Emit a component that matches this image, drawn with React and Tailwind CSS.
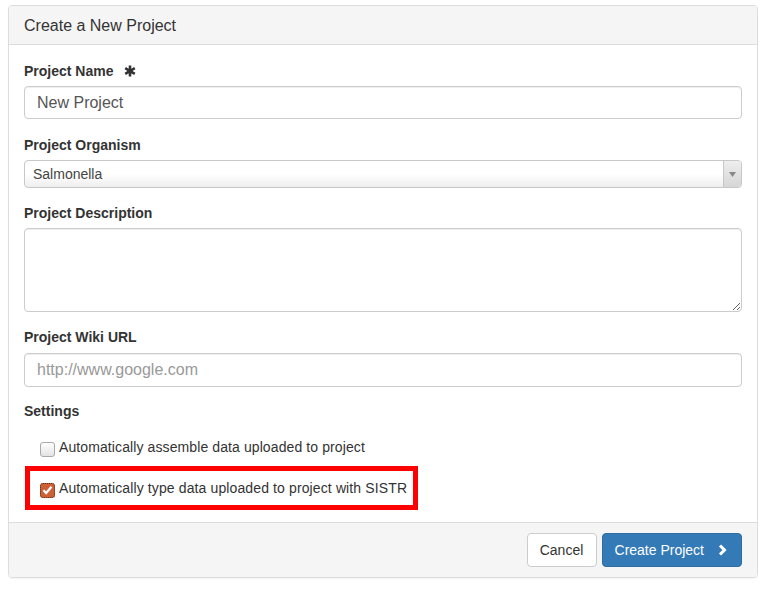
import React from 'react'

const FONT = { fontFamily: '"Liberation Sans", Arial, Helvetica, sans-serif' }

function Label({ children, mb = 'mb-[5px]' }) {
  return <div className={`h-[20px] leading-[20px] text-[14px] font-bold text-[#333] flex items-center ${mb}`}>{children}</div>
}

function Asterisk() {
  return (
    <svg width="12" height="12" viewBox="0 0 12 12" className="ml-[11px]">
      <g stroke="#333" strokeWidth="2.6" strokeLinecap="butt">
        <line x1="6" y1="0.5" x2="6" y2="11.5" />
        <line x1="1.2" y1="3.2" x2="10.8" y2="8.8" />
        <line x1="1.2" y1="8.8" x2="10.8" y2="3.2" />
      </g>
      <circle cx="6" cy="6" r="2.6" fill="#333" />
    </svg>
  )
}

function Checkbox({ checked }) {
  if (checked) {
    return (
      <span className="w-[15px] h-[15px] rounded-[3px] bg-[#cd6136] border border-dotted border-[#5a2a18] flex items-center justify-center shrink-0">
        <svg width="11" height="10" viewBox="0 0 11 10">
          <polyline points="1.5,5.2 4.2,8 9.5,1.8" fill="none" stroke="#fff" strokeWidth="2.2" />
        </svg>
      </span>
    )
  }
  return <span className="block w-[15px] h-[15px] rounded-[3px] border border-[#a9a9a9] bg-gradient-to-b from-[#ffffff] to-[#e3e3e3] shrink-0" />
}

export default function App() {
  return (
    <div className="w-[769px] h-[590px] bg-white pt-[5px] pl-[8px]" style={FONT}>
      <div className="w-[750px] border border-[#ddd] rounded-[4px] shadow-[0_1px_1px_rgba(0,0,0,0.05)] overflow-hidden">
        <div className="h-[39px] bg-[#f5f5f5] border-b border-[#ddd] px-[15px] pt-[2px] flex items-center text-[16px] text-[#333]">
          Create a New Project
        </div>

        <div className="px-[15px] pt-[16px] pb-[12px]">
          <Label>Project Name <Asterisk /></Label>
          <input
            defaultValue="New Project"
            className="w-full h-[33px] border border-[#ccc] rounded-[4px] px-[12px] text-[16px] text-[#555] shadow-[inset_0_1px_1px_rgba(0,0,0,0.075)] outline-none mb-[16px]"
          />

          <Label>Project Organism</Label>
          <div className="h-[28px] border border-[#c8c8c8] rounded-[4px] bg-gradient-to-b from-[#ffffff] from-50% to-[#eeeeee] flex items-center mb-[15px] overflow-hidden">
            <span className="flex-1 pl-[8px] text-[14px] text-[#444]">Salmonella</span>
            <span className="w-[18px] h-full border-l border-[#c8c8c8] bg-gradient-to-b from-[#eeeeee] to-[#d6d6d6] flex items-center justify-center">
              <svg width="7" height="5" viewBox="0 0 7 5"><polygon points="0,0 7,0 3.5,5" fill="#888" /></svg>
            </span>
          </div>

          <Label>Project Description</Label>
          <textarea className="block w-full h-[84px] border border-[#ccc] rounded-[4px] px-[12px] py-[6px] text-[14px] shadow-[inset_0_1px_1px_rgba(0,0,0,0.075)] outline-none mb-[15px]" />

          <Label mb="mb-[6px]">Project Wiki URL</Label>
          <input
            placeholder="http://www.google.com"
            className="w-full h-[34px] border border-[#ccc] rounded-[4px] px-[12px] text-[16px] text-[#555] placeholder:text-[#999] shadow-[inset_0_1px_1px_rgba(0,0,0,0.075)] outline-none mb-[14px]"
          />

          <Label mb="mb-0">Settings</Label>
          <div className="mt-[16px] h-[20px] pl-[16px] flex items-center gap-[4px] text-[14px] text-[#333] tracking-[0.1px]">
            <span className="mt-[5px]"><Checkbox /></span>
            <span>Automatically assemble data uploaded to project</span>
          </div>
          <div className="mt-[9px] ml-[1px] w-[393px] h-[44px] border-[5px] border-[#ff0000] pl-[10px] flex items-center gap-[4px] text-[14px] text-[#333] tracking-[0.12px]">
            <span className="mt-[4px]"><Checkbox checked /></span>
            <span>Automatically type data uploaded to project with SISTR</span>
          </div>
        </div>

        <div className="bg-[#f5f5f5] border-t border-[#ddd] px-[15px] py-[10px] flex justify-end gap-[5px]">
          <button className="h-[34px] w-[70px] border border-[#ccc] rounded-[4px] bg-white text-[14px] text-[#333]">Cancel</button>
          <button className="h-[34px] pl-[12px] pr-[14px] border border-[#2e6da4] rounded-[4px] bg-[#337ab7] text-[14px] text-white flex items-center gap-[14px]">
            Create Project
            <svg width="9" height="12" viewBox="0 0 9 12">
              <polyline points="2,1.5 6.5,6 2,10.5" fill="none" stroke="#fff" strokeWidth="3" />
            </svg>
          </button>
        </div>
      </div>
    </div>
  )
}
